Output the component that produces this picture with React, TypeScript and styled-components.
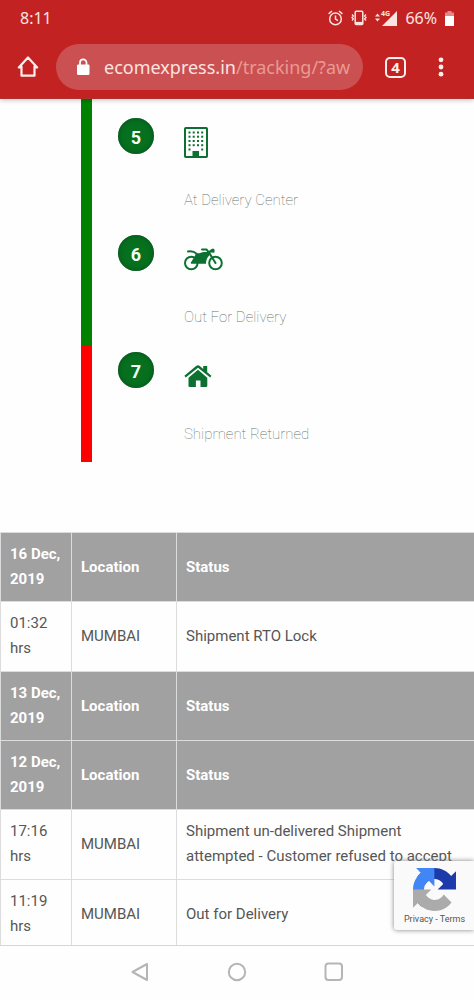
import React from "react";
import styled, { createGlobalStyle } from "styled-components";

const GlobalStyle = createGlobalStyle`
  * { box-sizing: border-box; }
  body { margin: 0; background: #fefefe; font-family: Roboto, "Liberation Sans", sans-serif; }
`;

const Screen = styled.div`
  display: flex;
  flex-direction: column;
  height: 100vh;
  overflow: hidden;
`;

const Header = styled.header`
  flex: none;
  background: #c32222;
  color: #fbe4e0;
  font-family: "Noto Sans", sans-serif;
  border-bottom: 1px solid #b03030;
  box-shadow: 0 1px 5px rgba(0, 0, 0, 0.25);
  z-index: 1;
`;

const StatusBar = styled.div`
  display: flex;
  align-items: center;
  justify-content: space-between;
  height: 36px;
  padding: 0 20px;
  font-size: 16px;
  line-height: 24px;
`;

const StatusIcons = styled.div`
  display: flex;
  align-items: center;
  gap: 8px;
`;

const Toolbar = styled.div`
  display: flex;
  align-items: center;
  padding: 8px 30px 8px 16px;
  gap: 16px;
`;

const IconButton = styled.button`
  display: flex;
  flex: none;
  padding: 0;
  border: 0;
  background: none;
  color: #fdeeee;
`;

const MenuButton = styled(IconButton)`
  margin-left: 16px;
`;

const AddressBar = styled.a`
  display: flex;
  flex: 1;
  align-items: center;
  gap: 13px;
  min-width: 0;
  height: 46px;
  padding: 0 12px 0 20px;
  border-radius: 23px;
  background: #cb5052;
  color: #fbe4e0;
  font-size: 18px;
  text-decoration: none;
`;

const Url = styled.span`
  flex: 1;
  overflow: hidden;
  white-space: nowrap;
`;

const UrlPath = styled.span`
  color: #e99a93;
`;

const TabsButton = styled(IconButton)`
  align-items: center;
  justify-content: center;
  width: 21px;
  height: 21px;
  margin-left: 6px;
  border: 2px solid #fdeeee;
  border-radius: 5px;
  font: bold 15px "Noto Sans", sans-serif;
`;

const Content = styled.main`
  position: relative;
  flex: 1;
  min-height: 0;
  overflow: hidden;
`;

const Steps = styled.ol`
  margin: 0 0 70px 81px;
  padding: 0;
  list-style: none;
`;

const Step = styled.li<{ $color: string; $first?: boolean }>`
  display: flex;
  gap: 30px;
  border-left: 11px solid ${(p) => p.$color};
  padding: ${(p) => (p.$first ? 19 : 7)}px 0 16px 26px;
`;

const StepNumber = styled.span`
  flex: none;
  width: 36px;
  height: 36px;
  border-radius: 50%;
  background: #06701f;
  box-shadow: inset 0 0 5px #0a4a20;
  color: #f2fff2;
  font-size: 18px;
  font-weight: 700;
  line-height: 40px;
  text-align: center;
`;

const StepBody = styled.div`
  color: #0b7030;
`;

const StepIcon = styled.div`
  display: flex;
  align-items: center;
  height: 48px;
`;

const StepLabel = styled.p`
  margin: 22px 0 0;
  color: #66746c;
  font-size: 15px;
  font-weight: 100;
  line-height: 24px;
`;

const History = styled.table`
  width: 100%;
  border-collapse: collapse;
  table-layout: fixed;
  font-size: 15px;
  line-height: 25px;
  text-align: left;
`;

const TimeCol = styled.col`
  width: 71px;
`;

const PlaceCol = styled.col`
  width: 105px;
`;

const HeadCell = styled.th`
  padding: 9px;
  border: 1px solid #dcdcdc;
  border-right: 0;
  background: #a1a1a1;
  color: #fff;
  font-weight: 700;
`;

const Cell = styled.td`
  padding: 9px 9px 10px;
  border: 1px solid #dcdcdc;
  border-right: 0;
  color: #565656;
`;

const Captcha = styled.aside`
  position: absolute;
  right: 0;
  bottom: 15px;
  display: flex;
  flex-direction: column;
  align-items: center;
  gap: 1px;
  width: 80px;
  height: 69px;
  padding: 7px 0 0 1px;
  border-radius: 3px 0 0 3px;
  background: #fafafa;
  box-shadow: 0 0 5px #808080;
  color: #555;
  font-size: 9px;
  line-height: 14px;
  white-space: nowrap;
`;

const CaptchaLink = styled.a`
  color: inherit;
  text-decoration: none;
`;

const NavBar = styled.nav`
  display: flex;
  flex: none;
  align-items: center;
  justify-content: center;
  gap: 77px;
  height: 55px;
  padding: 0 0 2px;
  border-top: 1px solid #d6d6d6;
  background: #fefefe;
`;

const NavButton = styled(IconButton)`
  color: #b5b5b5;
`;

const AlarmIcon = () => (
  <svg width="15" height="16" viewBox="0 0 15 16" fill="none" stroke="currentColor" strokeWidth="1.5">
    <circle cx="7.5" cy="8.9" r="5.8" />
    <path d="M7.5 5.4v3.8l2.5 1.5M.6 3.8L4 1M14.400 3.800L11 1" />
  </svg>
);

const VibrateIcon = () => (
  <svg width="16" height="16" viewBox="0 0 16 16" fill="none" stroke="currentColor">
    <rect x="4.2" y="1.2" width="7.6" height="13.4" rx="1" strokeWidth="1.5" />
    <path d="M4 13.2h8" strokeWidth="2.6" />
    <path d="M1 4.500L2.400 6 1 7.500 2.400 9 1 10.500M15 4.500L13.600 6 15 7.500 13.600 9 15 10.500" strokeWidth="1.300" />
  </svg>
);

const SignalIcon = () => (
  <svg width="22" height="18" viewBox="0 0 22 18" fill="currentColor">
    <path d="M0 7.500L2.500 4.500 5 7.500zM0 9.500h5L2.500 12.500zM22 2v15H7z" />
    <text x="6" y="7" fontSize="7" fontWeight="700" fontFamily="Noto Sans">4G</text>
  </svg>
);

const BatteryIcon = () => (
  <svg width="9" height="15" viewBox="0 0 9 15">
    <path d="M2.500 0h4v1.500H9V6H0V1.500h2.500z" fill="#e08a8a" />
    <path d="M0 5h9v10H0z" fill="#fff" />
  </svg>
);

const HomeIcon = () => (
  <svg width="24" height="24" viewBox="0 0 24 24" fill="none" stroke="currentColor" strokeWidth="2.200" strokeLinejoin="round" strokeLinecap="round">
    <path d="M5.500 12.500H2.800L12 2.500l9.200 10H18.500M5.500 11.500v9.200h13v-9.200" />
  </svg>
);

const LockIcon = () => (
  <svg width="15" height="18" viewBox="0 0 15 18">
    <rect x="1" y="6.500" width="12.500" height="10.500" rx="1.200" fill="#fff" />
    <path d="M4 7V4.700a3.250 3.250 0 0 1 6.500 0V7" fill="none" stroke="#fff" strokeWidth="1.700" />
  </svg>
);

const DotsIcon = () => (
  <svg width="6" height="20" viewBox="0 0 6 20" fill="currentColor">
    <circle cx="3" cy="2.800" r="2.400" />
    <circle cx="3" cy="10" r="2.400" />
    <circle cx="3" cy="17.200" r="2.400" />
  </svg>
);

const windows = [5.5, 9.7, 14, 18.200].flatMap((x) =>
  [5.500, 9.700, 14, 18.200, 22.500].map((y) => ({ x, y })),
);

const BuildingIcon = () => (
  <svg width="24" height="31" viewBox="0 0 24 31">
    <rect x="1" y="1" width="22" height="29" rx="0.800" fill="none" stroke="currentColor" strokeWidth="2" />
    {windows
      .filter((w) => w.y < 22 || w.x < 6 || w.x > 18)
      .map((w) => (
        <rect key={`${w.x}-${w.y}`} x={w.x - 1} y={w.y - 1} width="2" height="2" fill="currentColor" />
      ))}
    <path d="M8.500 24h6.500v6H8.500z" fill="currentColor" />
  </svg>
);

const MotorcycleIcon = () => (
  <svg width="39" height="23" viewBox="0 0 39 23" fill="none" stroke="currentColor">
    <circle cx="7.300" cy="15" r="6.300" strokeWidth="2" />
    <circle cx="31.500" cy="15" r="6.300" strokeWidth="2" />
    <path d="M12 5c3 1 5-.5 8-1h5l.8 3c-2.600 2.200-3.800 5-3.800 8.800H7.500c-.8 0-1-.8-.5-1.500l3.800-6z" fill="currentColor" stroke="none" />
    <path d="M4 3.400c4-.6 6-.2 8.500 2.200M18 1.500h4.500l2.500 3 6.500 10.500" strokeWidth="2" strokeLinecap="round" />
    <path d="M24.500 3.200l3.500-2.400h2c.8 1.200.8 2.800.2 4l-3.200-.4-2 .8z" fill="currentColor" stroke="none" />
  </svg>
);

const HouseIcon = () => (
  <svg width="28" height="23" viewBox="0 0 28 23" fill="currentColor">
    <path d="M14 4.800l9.300 7.900v8c0 .8-.4 1.200-1.200 1.200h-5.600v-6.500h-4.600v6.500H5.700c-.8 0-1.200-.4-1.200-1.200v-8z" />
    <path d="M.4 10.800L12.400.8c.9-.7 2.200-.7 3.100 0l3.700 3.100V1h4v6.300l4.200 3.500-1.200 1.600L14 2.700 1.700 12.400z" />
  </svg>
);

const RecaptchaIcon = () => (
  <svg width="43" height="43" viewBox="0 0 64 64">
    <path d="M64 31.955l-.033-1.370V4.687l-7.160 7.160C50.948 4.674 42.033.093 32.050.093c-10.400 0-19.622 4.960-25.458 12.640l11.736 11.860a15.550 15.550 0 0 1 4.754-5.334c2.050-1.600 4.952-2.906 8.968-2.906.485 0 .860.057 1.135.163 4.976.393 9.288 3.140 11.828 7.124l-8.307 8.307L64 31.953" fill="#1c3aa9" />
    <path d="M31.862.094l-1.370.033H4.594l7.160 7.160C4.580 13.147 0 22.060 0 32.046c0 10.400 4.960 19.622 12.640 25.458L24.500 45.768a15.550 15.550 0 0 1-5.334-4.754c-1.600-2.050-2.906-4.952-2.906-8.968 0-.485.057-.860.163-1.135.393-4.976 3.140-9.288 7.124-11.828l8.307 8.307L31.860.095" fill="#4285f4" />
    <path d="M.001 32.045l.033 1.370v25.898l7.160-7.160c5.860 7.173 14.774 11.754 24.760 11.754 10.400 0 19.622-4.960 25.458-12.640l-11.736-11.860a15.550 15.550 0 0 1-4.754 5.334c-2.050 1.600-4.952 2.906-8.968 2.906-.485 0-.860-.057-1.135-.163-4.976-.393-9.288-3.140-11.828-7.124l8.307-8.307c-10.522.040-22.400.066-27.295-.005" fill="#ababab" />
  </svg>
);

const BackIcon = () => (
  <svg width="20" height="20" viewBox="0 0 20 20" fill="none" stroke="currentColor" strokeWidth="2" strokeLinejoin="round">
    <path d="M17 2v16L2.500 10z" />
  </svg>
);

const CircleIcon = () => (
  <svg width="20" height="20" viewBox="0 0 20 20" fill="none" stroke="currentColor" strokeWidth="2">
    <circle cx="10" cy="10" r="8.200" />
  </svg>
);

const SquareIcon = () => (
  <svg width="20" height="20" viewBox="0 0 20 20" fill="none" stroke="currentColor" strokeWidth="2">
    <rect x="1.500" y="1.500" width="16.500" height="16.500" rx="3" />
  </svg>
);

const steps = [
  { number: 5, label: "At Delivery Center", color: "#008200", icon: <BuildingIcon /> },
  { number: 6, label: "Out For Delivery", color: "#008200", icon: <MotorcycleIcon /> },
  { number: 7, label: "Shipment Returned", color: "#fd0000", icon: <HouseIcon /> },
];

const history = [
  { head: true, cells: ["16 Dec, 2019", "Location", "Status"] },
  { head: false, cells: ["01:32 hrs", "MUMBAI", "Shipment RTO Lock"] },
  { head: true, cells: ["13 Dec, 2019", "Location", "Status"] },
  { head: true, cells: ["12 Dec, 2019", "Location", "Status"] },
  { head: false, cells: ["17:16 hrs", "MUMBAI", "Shipment un-delivered Shipment attempted - Customer refused to accept"] },
  { head: false, cells: ["11:19 hrs", "MUMBAI", "Out for Delivery"] },
];

export default function App() {
  return (
    <Screen>
      <GlobalStyle />
      <Header>
        <StatusBar>
          <span>8:11</span>
          <StatusIcons>
            <AlarmIcon />
            <VibrateIcon />
            <SignalIcon />
            <span>66%</span>
            <BatteryIcon />
          </StatusIcons>
        </StatusBar>
        <Toolbar>
          <IconButton aria-label="Home"><HomeIcon /></IconButton>
          <AddressBar href="#">
            <LockIcon />
            <Url>ecomexpress.in<UrlPath>/tracking/?aw</UrlPath></Url>
          </AddressBar>
          <TabsButton aria-label="Open tabs">4</TabsButton>
          <MenuButton aria-label="Menu"><DotsIcon /></MenuButton>
        </Toolbar>
      </Header>
      <Content>
        <Steps>
          {steps.map((step, index) => (
            <Step key={step.number} $color={step.color} $first={index === 0}>
              <StepNumber>{step.number}</StepNumber>
              <StepBody>
                <StepIcon>{step.icon}</StepIcon>
                <StepLabel>{step.label}</StepLabel>
              </StepBody>
            </Step>
          ))}
        </Steps>
        <History>
          <colgroup>
            <TimeCol />
            <PlaceCol />
            <col />
          </colgroup>
          <tbody>
            {history.map((row, index) => (
              <tr key={index}>
                {row.cells.map((text) =>
                  row.head ? <HeadCell key={text} scope="col">{text}</HeadCell> : <Cell key={text}>{text}</Cell>,
                )}
              </tr>
            ))}
          </tbody>
        </History>
        <Captcha>
          <RecaptchaIcon />
          <span>
            <CaptchaLink href="#">Privacy</CaptchaLink> - <CaptchaLink href="#">Terms</CaptchaLink>
          </span>
        </Captcha>
      </Content>
      <NavBar>
        <NavButton aria-label="Back"><BackIcon /></NavButton>
        <NavButton aria-label="Home screen"><CircleIcon /></NavButton>
        <NavButton aria-label="Recent apps"><SquareIcon /></NavButton>
      </NavBar>
    </Screen>
  );
}
